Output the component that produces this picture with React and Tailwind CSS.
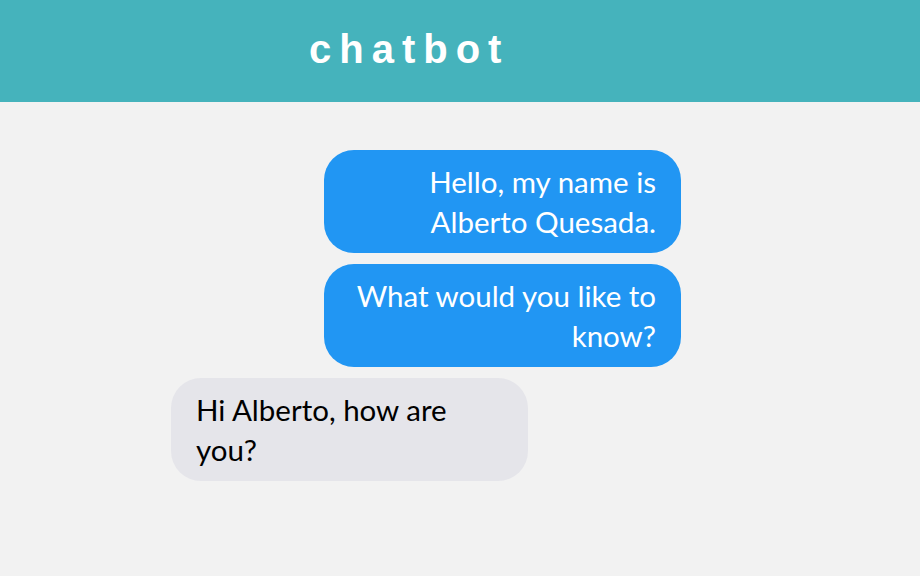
import React from 'react';

const messages = [
    { id: 1, from: 'me', text: 'Hello, my name is Alberto Quesada.' },
    { id: 2, from: 'me', text: 'What would you like to know?' },
    { id: 3, from: 'bot', text: 'Hi Alberto, how are you?' },
];

const Bubble = ({ from, text }) => {
    const mine = from === 'me';
    return (
        <div className={mine ? 'flex justify-end' : 'flex justify-start'}>
            <div
                className={
                    mine
                        ? 'w-[357px] rounded-[30px] bg-[#2196f3] px-[25px] pt-3 pb-[11px] text-right text-white'
                        : 'w-[357px] rounded-[30px] bg-[#e5e5ea] px-[25px] pt-3 pb-[11px] text-left text-black'
                }
            >
                {text}
            </div>
        </div>
    );
};

const App = () => {
    return (
        <div className="min-h-[576px] bg-[#f2f2f2] font-['Lato','Open_Sans',sans-serif]">
            <header className="flex h-[102px] items-center bg-[#45b3bc] pb-1 pl-[309px]">
                <h1 className="font-['Liberation_Sans',Arial,sans-serif] text-[40px] font-bold tracking-[8px] text-white">
                    chatbot
                </h1>
            </header>
            <div className="ml-[171px] mt-12 flex w-[510px] flex-col gap-[11px] text-[29.5px] leading-[40px]">
                {messages.map((m) => (
                    <Bubble key={m.id} from={m.from} text={m.text} />
                ))}
            </div>
        </div>
    );
};

export default App;
